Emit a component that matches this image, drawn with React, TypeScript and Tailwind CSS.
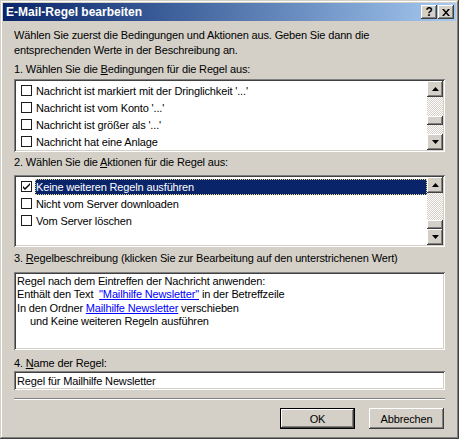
import React from "react"

// Win classic bevels
const raised =
  "shadow-[inset_-1px_-1px_#404040,inset_1px_1px_#ffffff,inset_-2px_-2px_#808080,inset_2px_2px_#d4d0c8]"
const sunken =
  "shadow-[inset_1px_1px_#808080,inset_-1px_-1px_#ffffff,inset_2px_2px_#404040,inset_-2px_-2px_#d4d0c8]"

function Arrow({ down }: { down?: boolean }) {
  return (
    <svg width="7" height="4" viewBox="0 0 7 4">
      {down ? <path d="M0 0h7L3.5 4z" fill="#000" /> : <path d="M0 4h7L3.5 0z" fill="#000" />}
    </svg>
  )
}

function ScrollBar({ before, track }: { before: number; track: number }) {
  return (
    <div className="flex w-4 flex-col">
      <div className={`flex h-4 w-4 items-center justify-center bg-[#d4d0c8] ${raised}`}>
        <Arrow />
      </div>
      <div
        className="flex flex-col bg-[repeating-conic-gradient(#d4d0c8_0_25%,#ffffff_0_50%)] bg-[length:2px_2px]"
        style={{ height: track }}
      >
        <div style={{ height: before }} />
        <div className={`h-[9px] w-4 bg-[#d4d0c8] ${raised}`} />
      </div>
      <div className={`flex h-4 w-4 items-center justify-center bg-[#d4d0c8] ${raised}`}>
        <Arrow down />
      </div>
    </div>
  )
}

function Check({ checked }: { checked?: boolean }) {
  return (
    <div className="flex h-[11px] w-[11px] shrink-0 items-center justify-center border border-[#1c1c1c] bg-white">
      {checked && (
        <svg width="7" height="7" viewBox="0 0 7 7">
          <path d="M0 3l2 2 5-5v2L2 7 0 5z" fill="#000" />
        </svg>
      )}
    </div>
  )
}

function Row({ label, checked, selected }: { label: string; checked?: boolean; selected?: boolean }) {
  return (
    <div className="flex h-[17px] items-center pl-[5px]">
      <Check checked={checked} />
      <div
        className={`ml-[3px] flex h-4 flex-1 items-center pl-[1px] ${
          selected ? "bg-[#0a246a] text-white outline-1 -outline-offset-1 outline-dotted outline-[#e6d98c]" : ""
        }`}
      >
        {label}
      </div>
    </div>
  )
}

export default function App() {
  return (
    <div
      className="flex h-[439px] w-[459px] flex-col bg-[#d4d0c8] p-[3px] text-[11px] leading-[14px] tracking-[-0.15px] text-black shadow-[inset_-1px_-1px_#404040,inset_1px_1px_#d4d0c8,inset_-2px_-2px_#808080,inset_2px_2px_#ffffff]"
      style={{ fontFamily: '"Liberation Sans", Arial, sans-serif' }}
    >
      {/* Title bar */}
      <div className="flex h-[18px] items-center bg-gradient-to-r from-[#0a246a] to-[#a6caf0] pl-[3px] pr-[2px]">
        <span className="flex-1 text-[12px] font-bold tracking-normal text-white">E-Mail-Regel bearbeiten</span>
        <div className={`flex h-[14px] w-4 items-center justify-center bg-[#d4d0c8] text-[12px] font-bold ${raised}`}>
          ?
        </div>
        <div className={`ml-[1px] flex h-[14px] w-4 items-center justify-center bg-[#d4d0c8] ${raised}`}>
          <svg width="8" height="7" viewBox="0 0 8 7">
            <path d="M0 0h2l2 2.5L6 0h2L5 3.5 8 7H6L4 4.5 2 7H0l3-3.5z" fill="#000" />
          </svg>
        </div>
      </div>

      {/* Body */}
      <div className="flex flex-col px-[11px]">
        <p className="mt-[7px] leading-[15px]">
          Wählen Sie zuerst die Bedingungen und Aktionen aus. Geben Sie dann die
          <br />
          entsprechenden Werte in der Beschreibung an.
        </p>

        <div className="mt-[4px]">
          1. Wählen Sie die <u>B</u>edingungen für die Regel aus:
        </div>
        <div className={`mt-[3px] flex h-[73px] bg-white p-[2px] ${sunken}`}>
          <div className="flex-1 overflow-hidden pt-[1px]">
            <Row label="Nachricht ist markiert mit der Dringlichkeit '...'" />
            <Row label="Nachricht ist vom Konto '...'" />
            <Row label="Nachricht ist größer als '...'" />
            <Row label="Nachricht hat eine Anlage" />
          </div>
          <ScrollBar before={19} track={37} />
        </div>

        <div className="mt-[3px]">
          2. Wählen Sie die <u>A</u>ktionen für die Regel aus:
        </div>
        <div className={`mt-[6px] flex h-[72px] bg-white p-[2px] ${sunken}`}>
          <div className="flex-1 overflow-hidden pt-[1px]">
            <Row label="Keine weiteren Regeln ausführen" checked selected />
            <Row label="Nicht vom Server downloaden" />
            <Row label="Vom Server löschen" />
          </div>
          <ScrollBar before={27} track={36} />
        </div>

        <div className="mt-[4px]">
          3. <u>R</u>egelbeschreibung (klicken Sie zur Bearbeitung auf den unterstrichenen Wert)
        </div>
        <div className={`mt-[7px] h-[78px] bg-white px-[3px] pt-[3px] leading-[13.3px] ${sunken}`}>
          <div>Regel nach dem Eintreffen der Nachricht anwenden:</div>
          <div>
            Enthält den Text&nbsp; <span className="text-[#0000ff] underline">"Mailhilfe Newsletter"</span> in der
            Betreffzeile
          </div>
          <div>
            In den Ordner <span className="text-[#0000ff] underline">Mailhilfe Newsletter</span> verschieben
          </div>
          <div className="pl-[13px]">und Keine weiteren Regeln ausführen</div>
        </div>

        <div className="mt-[6px]">
          4. <u>N</u>ame der Regel:
        </div>
        <div className={`mt-[1px] flex h-[19px] items-center bg-white px-[3px] ${sunken}`}>
          Regel für Mailhilfe Newsletter
        </div>

        <div className="mt-[8px] h-[2px] border-t border-b border-t-[#808080] border-b-white" />

        <div className="mt-[8px] flex justify-end gap-[14px] pr-[1px]">
          <div className="h-[21px] w-[75px] border border-black">
            <div className={`flex h-full w-full items-center justify-center bg-[#d4d0c8] ${raised}`}>OK</div>
          </div>
          <div className={`flex h-[21px] w-[75px] items-center justify-center bg-[#d4d0c8] ${raised}`}>
            Abbrechen
          </div>
        </div>
      </div>
    </div>
  )
}
